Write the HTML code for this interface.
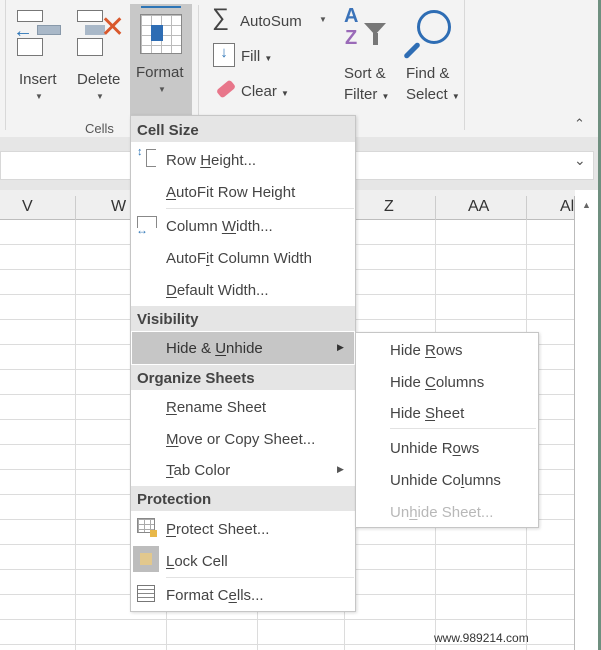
<!DOCTYPE html>
<html><head><meta charset="utf-8"><style>
*{margin:0;padding:0;box-sizing:border-box}
body{width:601px;height:650px;overflow:hidden;background:#fff;font-family:"Liberation Sans",sans-serif;color:#333;position:relative}
.a{position:absolute;white-space:nowrap}
.t{font-size:15px;color:#444;margin-top:1px}
.h{font-size:15px;font-weight:bold;color:#444;margin-top:1px}
.vl{position:absolute;top:220px;bottom:0;width:1px;background:#dcdcdc}
u{text-decoration:underline;text-underline-offset:2px}
</style></head><body>
<div class="a" style="left:0;top:0;width:601px;height:137px;background:#f3f3f3"></div>
<div class="a" style="left:0;top:137px;width:601px;height:53px;background:#e6e6e6"></div>
<div class="a" style="left:0;top:151px;width:594px;height:29px;background:#fff;border:1px solid #d8d8d8"></div>
<div class="a" style="left:574px;top:152px;font-size:14px;color:#555">&#8964;</div>
<div class="a" style="left:0;top:190px;width:575px;height:30px;background:#efefef;border-bottom:1px solid #bdbdbd"></div>
<div class="a" style="left:198px;top:5px;width:1px;height:120px;background:#d8d8d8"></div>
<div class="a" style="left:464px;top:0;width:1px;height:130px;background:#d8d8d8"></div>
<div class="a" style="left:5px;top:0;width:1px;height:130px;background:#d8d8d8"></div>
<div class="a" style="left:17px;top:10px;width:26px;height:12px;border:1px solid #777;background:#fff"></div>
<div class="a" style="left:17px;top:38px;width:26px;height:18px;border:1px solid #777;background:#fff"></div>
<div class="a" style="left:37px;top:25px;width:24px;height:10px;background:#a9b8c8;border:1px solid #8899aa"></div>
<div class="a" style="left:13px;top:20px;font-size:20px;color:#2e75b6;font-weight:bold">&#8592;</div>
<div class="a t" style="left:19px;top:70px">Insert</div>
<div class="a" style="left:35px;top:92px;font-size:8px;color:#555">&#9660;</div>
<div class="a" style="left:77px;top:10px;width:26px;height:12px;border:1px solid #777;background:#fff"></div>
<div class="a" style="left:77px;top:38px;width:26px;height:18px;border:1px solid #777;background:#fff"></div>
<div class="a" style="left:85px;top:25px;width:20px;height:10px;background:#a9b8c8"></div>
<div class="a" style="left:100px;top:10px;font-size:30px;color:#d9582c">&#10005;</div>
<div class="a t" style="left:77px;top:70px">Delete</div>
<div class="a" style="left:96px;top:92px;font-size:8px;color:#555">&#9660;</div>
<div class="a" style="left:85px;top:121px;font-size:13px;color:#555">Cells</div>
<div class="a" style="left:130px;top:4px;width:62px;height:111px;background:#c8c8c8"></div>
<div class="a" style="left:140px;top:14px;width:42px;height:40px;background:#fff;border:1px solid #888;background-image:linear-gradient(#bbb 1px,transparent 1px),linear-gradient(90deg,#bbb 1px,transparent 1px);background-size:10px 10px"></div>
<div class="a" style="left:151px;top:25px;width:12px;height:16px;background:#2e6db4"></div>
<div class="a" style="left:141px;top:6px;width:40px;height:2px;background:#2e75b6"></div>
<div class="a t" style="left:136px;top:63px">Format</div>
<div class="a" style="left:158px;top:85px;font-size:8px;color:#555">&#9660;</div>
<div class="a" style="left:212px;top:4px;font-size:24px;color:#444">&#8721;</div>
<div class="a t" style="left:240px;top:12px">AutoSum</div>
<div class="a" style="left:319px;top:15px;font-size:8px;color:#555">&#9660;</div>
<div class="a" style="left:213px;top:43px;width:22px;height:24px;border:1px solid #777;background:#fff;color:#2e75b6;font-weight:bold;text-align:center;font-size:15px">&#8595;</div>
<div class="a t" style="left:241px;top:47px">Fill <span style="font-size:8px">&#9660;</span></div>
<div class="a" style="left:217px;top:84px;width:18px;height:10px;background:#e8768a;border-radius:3px;transform:rotate(-40deg)"></div>
<div class="a t" style="left:241px;top:82px">Clear <span style="font-size:8px">&#9660;</span></div>
<div class="a" style="left:344px;top:6px;font-size:20px;font-weight:bold;color:#3b73b9;line-height:20px">A</div>
<div class="a" style="left:345px;top:28px;font-size:20px;font-weight:bold;color:#9a6ab8;line-height:20px">Z</div>
<div class="a" style="left:364px;top:23px;width:0;height:0;border-left:11px solid transparent;border-right:11px solid transparent;border-top:12px solid #777"></div>
<div class="a" style="left:373px;top:33px;width:5px;height:12px;background:#777"></div>
<div class="a t" style="left:344px;top:62px;line-height:21px">Sort &amp;<br>Filter <span style="font-size:8px">&#9660;</span></div>
<div class="a" style="left:417px;top:10px;width:34px;height:34px;border:3px solid #2e6db4;border-radius:50%"></div>
<div class="a" style="left:402px;top:48px;width:20px;height:5px;background:#2e6db4;border-radius:3px;transform:rotate(-45deg)"></div>
<div class="a t" style="left:406px;top:62px;line-height:21px">Find &amp;<br>Select <span style="font-size:8px">&#9660;</span></div>
<div class="a" style="left:574px;top:116px;font-size:13px;color:#555">&#8963;</div>
<div class="a" style="left:22px;top:198px;font-size:16px">V</div>
<div class="a" style="left:111px;top:198px;font-size:16px">W</div>
<div class="a" style="left:384px;top:198px;font-size:16px">Z</div>
<div class="a" style="left:468px;top:198px;font-size:16px">AA</div>
<div class="a" style="left:560px;top:198px;font-size:16px">Al</div>
<div class="a" style="left:75px;top:196px;width:1px;height:24px;background:#ccc"></div>
<div class="a" style="left:435px;top:196px;width:1px;height:24px;background:#ccc"></div>
<div class="a" style="left:526px;top:196px;width:1px;height:24px;background:#ccc"></div>
<div class="a" style="left:0;top:220px;width:575px;height:430px;background-image:linear-gradient(#dcdcdc 1px,transparent 1px);background-size:100% 25px;background-position:0 24px"></div>
<div class="vl" style="left:75px"></div><div class="vl" style="left:166px"></div><div class="vl" style="left:257px"></div><div class="vl" style="left:344px"></div><div class="vl" style="left:435px"></div><div class="vl" style="left:526px"></div>
<div class="a" style="left:574px;top:196px;width:27px;height:454px;background:#fff;border-left:1px solid #bbb"></div>
<div class="a" style="left:582px;top:200px;font-size:9px;color:#666">&#9650;</div>
<div class="a" style="left:598px;top:0;width:3px;height:650px;background:#6f8f7f"></div>
<div class="a" style="left:434px;top:631px;font-size:12px;color:#333">www.989214.com</div>
<div class="a" style="left:130px;top:115px;width:226px;height:497px;background:#fff;border:1px solid #c6c6c6;box-shadow:1px 1px 3px rgba(0,0,0,.15)"></div>
<div class="a" style="left:131px;top:116px;width:224px;height:26px;background:#e5e5e5"></div>
<div class="a h" style="left:137px;top:121px">Cell Size</div>
<div class="a" style="left:137px;top:148px;font-size:11px;color:#2e75b6;line-height:9px">&#8597;</div>
<div class="a" style="left:146px;top:149px;width:10px;height:18px;border:1px solid #888;border-right:none"></div>
<div class="a t" style="left:166px;top:151px">Row <u>H</u>eight...</div>
<div class="a t" style="left:166px;top:183px"><u>A</u>utoFit Row Height</div>
<div class="a" style="left:166px;top:208px;width:188px;height:1px;background:#e2e2e2"></div>
<div class="a" style="left:137px;top:216px;width:20px;height:12px;border:1px solid #888;border-bottom:none"></div>
<div class="a" style="left:136px;top:223px;font-size:12px;color:#2e75b6">&#8596;</div>
<div class="a t" style="left:166px;top:217px">Column <u>W</u>idth...</div>
<div class="a t" style="left:166px;top:249px">AutoF<u>i</u>t Column Width</div>
<div class="a t" style="left:166px;top:281px"><u>D</u>efault Width...</div>
<div class="a" style="left:131px;top:306px;width:224px;height:25px;background:#e5e5e5"></div>
<div class="a h" style="left:137px;top:310px">Visibility</div>
<div class="a" style="left:132px;top:332px;width:222px;height:32px;background:#c6c6c6"></div>
<div class="a t" style="left:166px;top:339px;color:#333">Hide &amp; <u>U</u>nhide</div>
<div class="a" style="left:337px;top:342px;font-size:9px;color:#333">&#9654;</div>
<div class="a" style="left:131px;top:365px;width:224px;height:25px;background:#e5e5e5"></div>
<div class="a h" style="left:137px;top:369px">Organize Sheets</div>
<div class="a t" style="left:166px;top:398px"><u>R</u>ename Sheet</div>
<div class="a t" style="left:166px;top:430px"><u>M</u>ove or Copy Sheet...</div>
<div class="a t" style="left:166px;top:461px"><u>T</u>ab Color</div>
<div class="a" style="left:337px;top:464px;font-size:9px;color:#555">&#9654;</div>
<div class="a" style="left:131px;top:486px;width:224px;height:25px;background:#e5e5e5"></div>
<div class="a h" style="left:137px;top:490px">Protection</div>
<div class="a" style="left:137px;top:518px;width:18px;height:15px;border:1px solid #888;background-image:linear-gradient(#aaa 1px,transparent 1px),linear-gradient(90deg,#aaa 1px,transparent 1px);background-size:6px 5px"></div>
<div class="a" style="left:150px;top:530px;width:7px;height:7px;background:#e8b84a"></div>
<div class="a t" style="left:166px;top:520px"><u>P</u>rotect Sheet...</div>
<div class="a" style="left:133px;top:546px;width:26px;height:26px;background:#bdbdbd"></div>
<div class="a" style="left:140px;top:553px;width:12px;height:12px;background:#e2c88d"></div>
<div class="a t" style="left:166px;top:552px"><u>L</u>ock Cell</div>
<div class="a" style="left:166px;top:577px;width:188px;height:1px;background:#e2e2e2"></div>
<div class="a" style="left:137px;top:585px;width:18px;height:17px;border:1px solid #777;background:repeating-linear-gradient(#fff 0 3px,#888 3px 4px)"></div>
<div class="a t" style="left:166px;top:586px">Format C<u>e</u>lls...</div>
<div class="a" style="left:355px;top:332px;width:184px;height:196px;background:#fff;border:1px solid #c6c6c6;box-shadow:1px 1px 3px rgba(0,0,0,.15)"></div>
<div class="a t" style="left:390px;top:341px">Hide <u>R</u>ows</div>
<div class="a t" style="left:390px;top:373px">Hide <u>C</u>olumns</div>
<div class="a t" style="left:390px;top:404px">Hide <u>S</u>heet</div>
<div class="a" style="left:390px;top:428px;width:146px;height:1px;background:#e2e2e2"></div>
<div class="a t" style="left:390px;top:439px">Unhide R<u>o</u>ws</div>
<div class="a t" style="left:390px;top:471px">Unhide Co<u>l</u>umns</div>
<div class="a t" style="left:390px;top:503px;color:#b8b8b8">Un<u>h</u>ide Sheet...</div>
</body></html>
